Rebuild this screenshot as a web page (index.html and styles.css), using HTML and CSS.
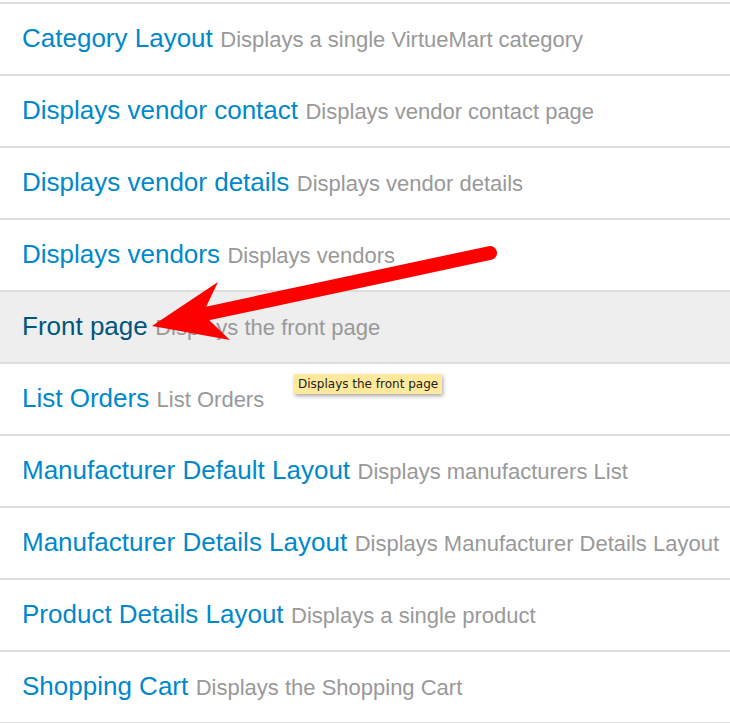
FILE: index.html
```html
<!DOCTYPE html>
<html>
<head>
<meta charset="utf-8">
<link rel="stylesheet" href="styles.css">
</head>
<body>
<div class="page">
  <ul class="layouts">
    <li class="row"><div class="line"><a class="title">Category Layout</a> <span class="desc">Displays a single VirtueMart category</span></div></li>
    <li class="row"><div class="line"><a class="title">Displays vendor contact</a> <span class="desc">Displays vendor contact page</span></div></li>
    <li class="row"><div class="line"><a class="title">Displays vendor details</a> <span class="desc">Displays vendor details</span></div></li>
    <li class="row"><div class="line"><a class="title">Displays vendors</a> <span class="desc">Displays vendors</span></div></li>
    <li class="row hover"><div class="line"><a class="title">Front page</a> <span class="desc">Displays the front page</span></div></li>
    <li class="row"><div class="line"><a class="title">List Orders</a> <span class="desc">List Orders</span></div></li>
    <li class="row"><div class="line"><a class="title">Manufacturer Default Layout</a> <span class="desc">Displays manufacturers List</span></div></li>
    <li class="row"><div class="line"><a class="title">Manufacturer Details Layout</a> <span class="desc">Displays Manufacturer Details Layout</span></div></li>
    <li class="row"><div class="line"><a class="title">Product Details Layout</a> <span class="desc">Displays a single product</span></div></li>
    <li class="row"><div class="line"><a class="title">Shopping Cart</a> <span class="desc">Displays the Shopping Cart</span></div></li>
  </ul>
  <div class="tooltip">Displays the front page</div>
  <svg class="arrow" width="730" height="723" viewBox="0 0 730 723">
    <line x1="490" y1="253" x2="205" y2="314" stroke="#ff0000" stroke-width="14" stroke-linecap="round"/>
    <polygon points="152,326 218,282 206,307 210,321 230,340" fill="#ff0000"/>
  </svg>
</div>
</body>
</html>
```

FILE: styles.css
```css
html, body {
  margin: 0;
  padding: 0;
  background: #fff;
}
.page {
  position: relative;
  width: 730px;
  height: 723px;
  overflow: hidden;
  font-family: "Liberation Sans", Arial, sans-serif;
}
.layouts {
  list-style: none;
  margin: 2px 0 0 0;
  padding: 0;
}
.row {
  display: flex;
  align-items: center;
  height: 70px;
  box-sizing: content-box;
  padding-left: 23px;
  border-top: 2px solid #ddd;
}
.row:last-child {
  border-bottom: 2px solid #ddd;
}
.line {
  white-space: nowrap;
  line-height: 30px;
  padding-top: 2px;
  margin-left: -1px;
}
.title {
  color: #0088cc;
  font-size: 26px;
}
.desc {
  color: #999;
  font-size: 22px;
  margin-left: 3px;
}
.hover {
  background: #eee;
}
.hover .title {
  color: #005580;
}
.tooltip {
  position: absolute;
  left: 294px;
  top: 374px;
  padding: 2px 4px;
  background: #ffe99c;
  color: #222;
  font-family: "DejaVu Sans", sans-serif;
  font-size: 12px;
  line-height: 16px;
  box-shadow: 1px 2px 4px rgba(0,0,0,0.35);
}
.arrow {
  position: absolute;
  left: 0;
  top: 0;
}
```
